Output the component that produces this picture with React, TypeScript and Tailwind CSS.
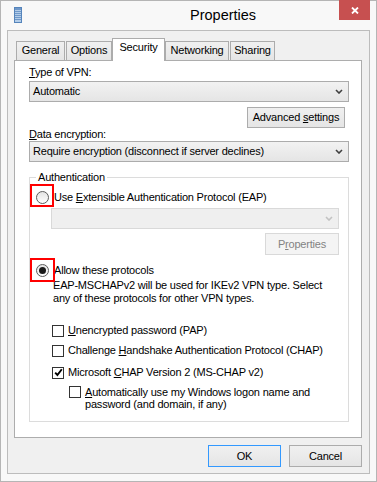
import React from "react";

function Chevron({ color = "#404040" }: { color?: string }) {
  return (
    <svg width="8" height="5" viewBox="0 0 8 5" className="shrink-0">
      <path d="M1 1 L4 4 L7 1" fill="none" stroke={color} strokeWidth="1.6" />
    </svg>
  );
}

function Combo({ text, disabled }: { text?: string; disabled?: boolean }) {
  return (
    <div
      className={
        disabled
          ? "flex h-[21px] items-center justify-end border border-[#d9d9d9] bg-[#efefef] pr-[5px]"
          : "flex h-[21px] items-center justify-between border border-[#acacac] bg-linear-to-b from-[#f2f2f2] to-[#e5e5e5] pl-[3px] pr-[5px]"
      }
    >
      {text && <span>{text}</span>}
      <Chevron color={disabled ? "#c2c2c2" : "#404040"} />
    </div>
  );
}

function Radio({ checked }: { checked?: boolean }) {
  return (
    <span className="flex h-[13px] w-[13px] shrink-0 items-center justify-center rounded-full border border-[#5c5c5c] bg-linear-to-b from-[#e4e4e4] to-white">
      {checked && <span className="h-[7px] w-[7px] rounded-full bg-[#1a1a1a]" />}
    </span>
  );
}

function Check({ checked }: { checked?: boolean }) {
  return (
    <span className="flex h-[12px] w-[12px] shrink-0 items-center justify-center border border-[#333] bg-white">
      {checked && (
        <svg width="9" height="9" viewBox="0 0 9 9">
          <path d="M1.2 4.6 L3.4 7 L7.8 1.2" fill="none" stroke="#000" strokeWidth="1.9" />
        </svg>
      )}
    </span>
  );
}

function Tab({ label, width, selected, gap }: { label: string; width: string; selected?: boolean; gap?: boolean }) {
  if (selected) {
    return (
      <div
        className={`relative z-10 -mb-px flex h-[23px] justify-center border border-b-0 border-[#acacac] bg-white pt-[2px] ${width}`}
      >
        {label}
      </div>
    );
  }
  return (
    <div
      className={`flex h-[19px] justify-center border border-b-0 border-[#acacac] bg-linear-to-b from-[#f0f0f0] to-[#e5e5e5] pt-[2px] ${width} ${gap ? "ml-px" : ""}`}
    >
      {label}
    </div>
  );
}

function U({ children }: { children: React.ReactNode }) {
  return <span className="underline underline-offset-[1px]">{children}</span>;
}

export default function App() {
  return (
    <div className="h-[482px] w-[377px] border border-[#b5b5b5] bg-[#f8f8f8] font-['Liberation_Sans',Arial,sans-serif] text-[11px] leading-[13px] tracking-[-0.2px] text-black">
      {/* title bar */}
      <div className="flex h-[29px] items-start">
        <div className="ml-[13px] mt-[6px]">
          <svg width="8" height="16" viewBox="0 0 8 16">
            <rect x="0.5" y="0.5" width="7" height="15" fill="#b3cde9" stroke="#5584bb" />
            <rect x="1" y="1" width="6" height="2" fill="#6f98c9" />
            {[4, 6, 8, 10, 12].map((y) => (
              <line key={y} x1="1" x2="7" y1={y + 0.5} y2={y + 0.5} stroke="#6f98c9" />
            ))}
          </svg>
        </div>
        <div className="ml-[168px] mt-[5px] text-[14.5px] leading-[18px] tracking-normal">Properties</div>
        <div className="flex-1" />
        <div className="-mt-px mr-[6px] flex h-[20px] w-[31px] items-center justify-center bg-[#c75050]">
          <svg width="8" height="7" viewBox="0 0 8 7">
            <path d="M1 0.5 L7 6.5 M7 0.5 L1 6.5" stroke="#fff" strokeWidth="1.8" />
          </svg>
        </div>
      </div>

      {/* client area */}
      <div className="mx-[6px] h-[444px] border border-[#bcbcbc] bg-[#f0f0f0]">
        <div className="ml-[8px] mt-[7px] flex h-[22px] items-end">
          <Tab label="General" width="w-[49px]" />
          <Tab label="Options" width="w-[46px]" gap />
          <Tab label="Security" width="w-[53px]" selected />
          <Tab label="Networking" width="w-[64px]" />
          <Tab label="Sharing" width="w-[45px]" gap />
        </div>

        <div className="ml-[6px] h-[378px] w-[348px] border border-[#adadad] bg-white pl-[14px]">
          <div className="mt-[5px]">
            <U>T</U>ype of VPN:
          </div>
          <div className="mt-[2px] w-[320px]">
            <Combo text="Automatic" />
          </div>
          <div className="ml-[218px] mt-[5px] flex h-[21px] w-[98px] items-center justify-center border border-[#acacac] bg-linear-to-b from-[#f0f0f0] to-[#e5e5e5]">
            <span>
              Advanced <U>s</U>ettings
            </span>
          </div>
          <div>
            <U>D</U>ata encryption:
          </div>
          <div className="w-[320px]">
            <Combo text="Require encryption (disconnect if server declines)" />
          </div>

          {/* Authentication group */}
          <div className="relative mt-[15px] h-[245px] w-[320px] border border-[#dcdcdc]">
            <span className="absolute left-[6px] top-[-7px] bg-white px-[2px]">Authentication</span>
            <div className="absolute left-0 top-[6px] h-[23px] w-[24px] border-2 border-[#f00]" />
            <div className="absolute left-0 top-[80px] h-[24px] w-[25px] border-2 border-[#f00]" />

            <div className="mt-[13px] flex items-center pl-[6px]">
              <Radio />
              <span className="ml-[5px]">
                Use <U>E</U>xtensible Authentication Protocol (EAP)
              </span>
            </div>
            <div className="ml-[21px] mt-[4px] w-[288px]">
              <Combo disabled />
            </div>
            <div className="ml-[235px] mt-[4px] flex h-[22px] w-[74px] items-center justify-center border border-[#d9d9d9] bg-[#f4f4f4] text-[#838383]">
              <span>
                P<U>r</U>operties
              </span>
            </div>

            <div className="mt-[9px] flex items-center pl-[6px]">
              <Radio checked />
              <span className="ml-[5px]">Allow these protocols</span>
            </div>
            <div className="ml-[23px] mt-[2px]">
              EAP-MSCHAPv2 will be used for IKEv2 VPN type. Select
              <br />
              any of these protocols for other VPN types.
            </div>

            <div className="mt-[19px] flex items-center pl-[22px]">
              <Check />
              <span className="ml-[4px]">
                <U>U</U>nencrypted password (PAP)
              </span>
            </div>
            <div className="mt-[7px] flex items-center pl-[22px]">
              <Check />
              <span className="ml-[4px]">
                Challenge <U>H</U>andshake Authentication Protocol (CHAP)
              </span>
            </div>
            <div className="mt-[9px] flex items-center pl-[22px]">
              <Check checked />
              <span className="ml-[4px]">
                Microsoft <U>C</U>HAP Version 2 (MS-CHAP v2)
              </span>
            </div>
            <div className="mt-[7px] flex items-start pl-[39px]">
              <Check />
              <span className="ml-[4px] leading-[12px]">
                <U>A</U>utomatically use my Windows logon name and
                <br />
                password (and domain, if any)
              </span>
            </div>
          </div>
        </div>

        <div className="mt-[7px] flex justify-end gap-[8px] pr-[7px]">
          <div className="flex h-[22px] w-[73px] items-center justify-center border border-[#3399ff] bg-linear-to-b from-[#f0f0f0] to-[#e5e5e5]">
            OK
          </div>
          <div className="flex h-[22px] w-[73px] items-center justify-center border border-[#acacac] bg-linear-to-b from-[#f0f0f0] to-[#e5e5e5]">
            Cancel
          </div>
        </div>
      </div>
    </div>
  );
}
